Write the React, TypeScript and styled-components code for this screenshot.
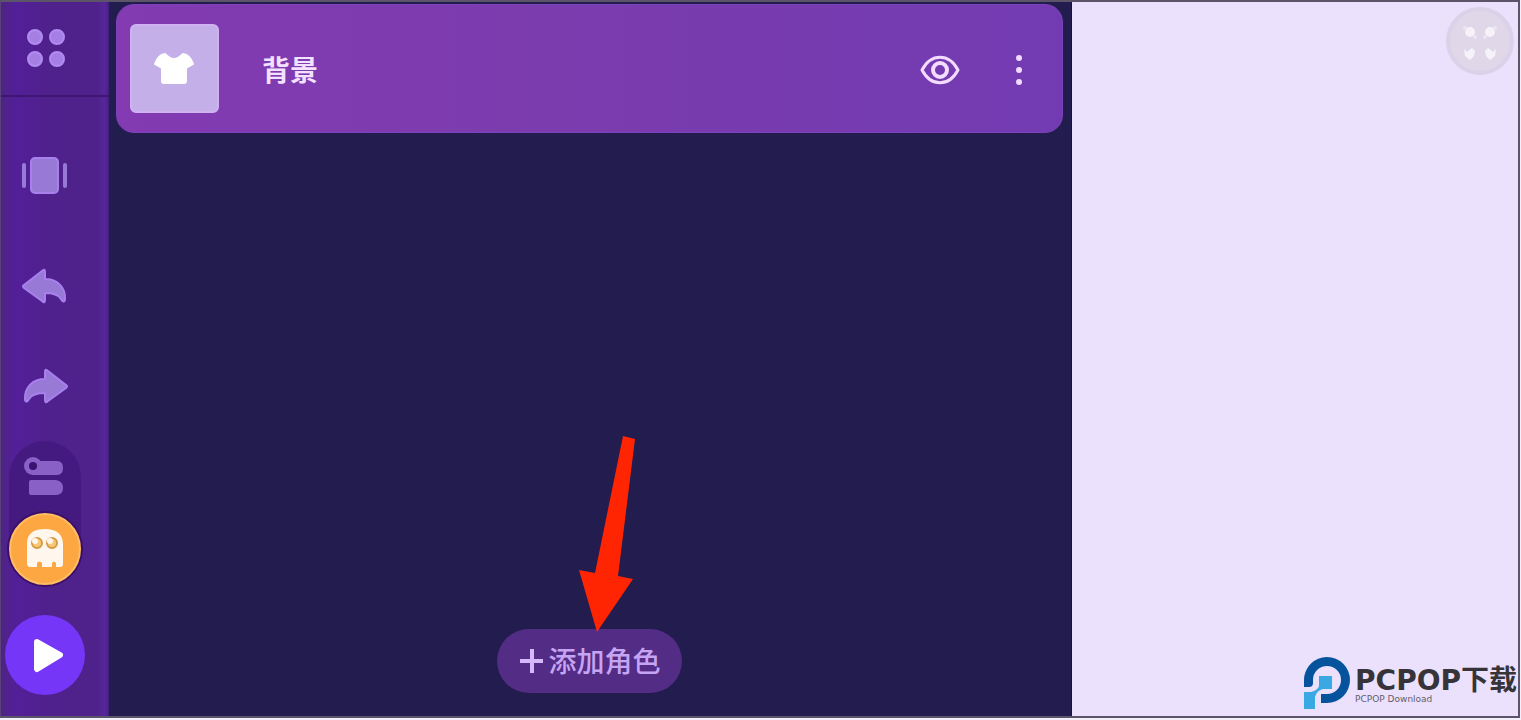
import React from "react";
import styled, { createGlobalStyle } from "styled-components";

const GlobalStyle = createGlobalStyle`
  *, *::before, *::after { box-sizing: border-box; }
  body { margin: 0; background: #f4f0fb; font-family: "Noto Sans", "Noto Sans CJK SC", sans-serif; }
  button { border: 0; padding: 0; margin: 0; background: none; font: inherit; color: inherit; cursor: pointer; }
  svg { display: block; }
  h1 { margin: 0; }
`;

const Page = styled.div`
  min-height: 100vh;
  padding-bottom: 2px;
  display: flex;
`;

const Frame = styled.div`
  flex: 1;
  display: grid;
  grid-template-columns: 108px minmax(0, 963fr) minmax(0, 446fr);
  margin-right: 1px;
  border: 2px solid #5c5468;
  border-left: 1px solid #5a4378;
`;

const Sidebar = styled.aside`
  display: flex;
  flex-direction: column;
  background: linear-gradient(90deg, #4d2482 0, #531f99 14px, #4f218b 50px, #4f218b 96px, #56279a 104px, #43207c 108px);
`;

const SidebarHead = styled.div`
  height: 95px;
  padding: 23px 20px;
  border-bottom: 2px solid #3c1672;
`;

const Tools = styled.nav`
  width: 88px;
  display: flex;
  flex-direction: column;
  align-items: center;
`;

const ToolButton = styled.button<{ $gap: number }>`
  width: 48px;
  height: 48px;
  margin-top: ${(p) => p.$gap}px;
`;

const ModeSwitch = styled.div`
  width: 72px;
  margin-top: 30px;
  border-radius: 36px;
  background: #451a80;
`;

const ModeButton = styled.button`
  display: block;
  width: 72px;
  height: 72px;
`;

const PlayButton = styled.button`
  width: 80px;
  height: 80px;
  margin-top: 30px;
  border-radius: 50%;
  background: #7636f8;
`;

const Stage = styled.main`
  display: flex;
  flex-direction: column;
  justify-content: space-between;
  padding: 2px 8px 23px 7px;
  background: #231c4e;
  border-right: 1px solid #171044;
`;

const LayerCard = styled.section`
  height: 129px;
  display: flex;
  align-items: center;
  padding: 0 20px 0 13px;
  border-radius: 18px;
  border: 1px solid #7b42bb;
  background: linear-gradient(90deg, #833ab2, #7b3cae 45%, #733bb2);
`;

const Thumb = styled.button`
  width: 89px;
  height: 89px;
  border-radius: 6px;
  border: 2px solid #ceb2f2;
  background: #c5afe9;
`;

const LayerName = styled.span`
  flex: 1;
  padding: 2px 0 0 43px;
  font-size: 28px;
  line-height: 40px;
  font-weight: 600;
  color: #f3e2ff;
`;

const CardButton = styled.button`
  width: 48px;
  height: 48px;
  margin-left: 32px;
`;

const AddArea = styled.div`
  position: relative;
  align-self: center;
`;

const AddButton = styled.button`
  display: flex;
  align-items: center;
  justify-content: center;
  gap: 4px;
  width: 185px;
  height: 64px;
  border-radius: 32px;
  background: #532c85;
  color: #c5a5f3;
  font-size: 28px;
  line-height: 40px;
  font-weight: 500;
`;

const Pointer = styled.svg`
  position: absolute;
  left: 80px;
  bottom: 60px;
  pointer-events: none;
`;

const Preview = styled.section`
  display: flex;
  flex-direction: column;
  justify-content: space-between;
  align-items: flex-end;
  background: #ebe1fd;
`;

const ExpandButton = styled.button`
  width: 68px;
  height: 68px;
  margin: 5px 4px 0 0;
  border-radius: 50%;
  border: 4px solid #dbd1e8;
  background: #e0d8e9;
`;

const Brand = styled.footer`
  display: flex;
  align-items: center;
  gap: 4px;
  margin: 0 1px 6px 0;
`;

const BrandText = styled.div`
  display: flex;
  flex-direction: column;
  padding-top: 6px;
  white-space: nowrap;
  color: #373439;
`;

const BrandName = styled.h1`
  font-family: "DejaVu Sans", "Noto Sans CJK SC", sans-serif;
  font-size: 28px;
  line-height: 26px;
  font-weight: 700;
`;

const BrandSub = styled.span`
  font-family: "DejaVu Sans", sans-serif;
  font-size: 9px;
  line-height: 10px;
  color: #625d69;
`;

const TOOL = "#987ad6";
const EDGE = "#a780ee";

function GridIcon() {
  return (
    <svg width="48" height="48" viewBox="0 0 48 48" fill="#a57fe3" stroke="#b18bf0" strokeWidth="2">
      <circle cx="14" cy="12" r="7" />
      <circle cx="36" cy="12" r="7" />
      <circle cx="14" cy="34" r="7" />
      <circle cx="36" cy="34" r="7" />
    </svg>
  );
}

function FramesIcon() {
  return (
    <svg width="48" height="48" viewBox="0 0 48 48" fill={TOOL}>
      <rect x="10" y="7" width="27" height="35" rx="4" stroke={EDGE} strokeWidth="2" />
      <rect x="1" y="12" width="4" height="25" rx="2" />
      <rect x="42" y="12" width="4" height="25" rx="2" />
    </svg>
  );
}

const ARROW = "M3 22 L21 8 Q24 5 24 9 V16 C36 16 45 24 44 37 C43 40 41 38 40 36 C37 31 32 30 24 30 V37 Q24 41 21 38 L3 25 Q1 23 3 22 Z";

function UndoIcon() {
  return (
    <svg width="48" height="48" viewBox="0 0 48 48">
      <path d={ARROW} fill={TOOL} stroke={EDGE} strokeWidth="2" strokeLinejoin="round" />
    </svg>
  );
}

function RedoIcon() {
  return (
    <svg width="48" height="48" viewBox="0 0 48 48">
      <path d={ARROW} transform="translate(48 0) scale(-1 1)" fill={TOOL} stroke={EDGE} strokeWidth="2" strokeLinejoin="round" />
    </svg>
  );
}

function BlocksIcon() {
  return (
    <svg width="72" height="72" viewBox="0 0 72 72" fill="#8860c6">
      <path d="M24 20 H48 Q54 20 54 27 Q54 34 48 34 H23 Z" />
      <circle cx="24" cy="25" r="9" />
      <circle cx="24" cy="25" r="4" fill="#3a1270" />
      <path d="M22 39 H47 Q54 40 54 47 Q54 54 47 54 H22 Q20 54 20 52 V41 Q20 39 22 39 Z" />
    </svg>
  );
}

function GhostIcon() {
  return (
    <svg width="72" height="72" viewBox="0 0 72 72" overflow="visible">
      <circle cx="36" cy="36" r="38" fill="#3b0f68" />
      <circle cx="36" cy="36" r="35" fill="#fda742" stroke="#ffbd66" strokeWidth="2" />
      <path d="M18 50 V31 C18 20 25 16 36 16 C47 16 54 21 54 31 V51 Q54 54 51 54 H47 V50 Q45 47 43 50 V54 H33 V50 Q30 47 28 50 V54 H21 Q18 54 18 50 Z" fill="#fff7ed" />
      <g fill="#f7c977" stroke="#d69a45" strokeWidth="2">
        <circle cx="28" cy="30" r="5" />
        <circle cx="43" cy="30" r="5" />
      </g>
      <g fill="#fff7ed">
        <circle cx="26" cy="28" r="3" />
        <circle cx="41" cy="28" r="3" />
      </g>
    </svg>
  );
}

function PlayIcon() {
  return (
    <svg width="80" height="80" viewBox="0 0 80 80">
      <path d="M32 27 L55 40 L32 54 Z" fill="#fff" stroke="#fff" strokeWidth="6" strokeLinejoin="round" />
    </svg>
  );
}

function ShirtIcon() {
  return (
    <svg width="85" height="85" viewBox="0 0 85 85">
      <path d="M33 28 Q42 38 51 28 Q58 29 61 38 L54 42 V55 Q54 57 52 57 H32 Q30 57 30 55 V42 L23 38 Q26 29 33 28 Z" fill="#fff" stroke="#fff" strokeWidth="2" strokeLinejoin="round" />
    </svg>
  );
}

function EyeIcon() {
  return (
    <svg width="48" height="48" viewBox="0 0 48 48" fill="none" stroke="#f3dcff" strokeWidth="3">
      <path d="M8 25 C17 8 35 8 44 25 C35 42 17 42 8 25 Z" strokeLinejoin="round" />
      <circle cx="26" cy="25" r="7" strokeWidth="4" />
    </svg>
  );
}

function MoreIcon() {
  return (
    <svg width="48" height="48" viewBox="0 0 48 48" fill="#f3dcff">
      <circle cx="25" cy="13" r="3" />
      <circle cx="25" cy="25" r="3" />
      <circle cx="25" cy="37" r="3" />
    </svg>
  );
}

function PlusIcon() {
  return (
    <svg width="26" height="26" viewBox="0 0 26 26" stroke="#d4b8fb" strokeWidth="4">
      <path d="M2 13 H25 M14 1 V25" />
    </svg>
  );
}

function ExpandIcon() {
  return (
    <svg width="60" height="60" viewBox="0 0 60 60" fill="#f6f2fa">
      <circle cx="20" cy="21" r="5" />
      <circle cx="40" cy="21" r="5" />
      <path d="M14 38 L17 41 L22 37 L25 40 L24 45 L20 49 L15 45 Z" />
      <path d="M46 38 L43 41 L38 37 L35 40 L36 45 L40 49 L45 45 Z" />
      <g fill="#ece5f3">
        <circle cx="15" cy="17" r="2" />
        <circle cx="45" cy="17" r="2" />
        <circle cx="25" cy="26" r="2" />
        <circle cx="35" cy="26" r="2" />
      </g>
    </svg>
  );
}

function BrandLogo() {
  return (
    <svg width="48" height="54" viewBox="0 0 48 54" aria-hidden="true">
      <path d="M1 31 V24 A23 23 0 1 1 24 47 H18 V38 H24 A14 14 0 1 0 10 24 V27 Q10 31 6 31 Z" fill="#05539d" />
      <path d="M16 20 H29 V33 H20 Q14 34 12 41 V53 H1 V36 H8 Q15 34 16 30 Z" fill="#39a8e3" />
    </svg>
  );
}

export default function App() {
  return (
    <>
      <GlobalStyle />
      <Page>
        <Frame>
          <Sidebar>
            <SidebarHead>
              <button aria-label="菜单"><GridIcon /></button>
            </SidebarHead>
            <Tools>
              <ToolButton $gap={54} aria-label="场景"><FramesIcon /></ToolButton>
              <ToolButton $gap={64} aria-label="撤销"><UndoIcon /></ToolButton>
              <ToolButton $gap={52} aria-label="重做"><RedoIcon /></ToolButton>
              <ModeSwitch>
                <ModeButton aria-label="积木"><BlocksIcon /></ModeButton>
                <ModeButton aria-label="角色"><GhostIcon /></ModeButton>
              </ModeSwitch>
              <PlayButton aria-label="播放"><PlayIcon /></PlayButton>
            </Tools>
          </Sidebar>
          <Stage>
            <LayerCard>
              <Thumb aria-label="背景造型"><ShirtIcon /></Thumb>
              <LayerName>背景</LayerName>
              <CardButton aria-label="显示"><EyeIcon /></CardButton>
              <CardButton aria-label="更多"><MoreIcon /></CardButton>
            </LayerCard>
            <AddArea>
              <AddButton>
                <PlusIcon />
                <span>添加角色</span>
              </AddButton>
              <Pointer width="60" height="200" viewBox="0 0 60 200" aria-hidden="true">
                <path d="M46 3 L58 6 L41 143 L56 146 L20 199 L2 137 L18 140 Z" fill="#ff2503" />
              </Pointer>
            </AddArea>
          </Stage>
          <Preview>
            <ExpandButton aria-label="全屏"><ExpandIcon /></ExpandButton>
            <Brand>
              <BrandLogo />
              <BrandText>
                <BrandName>PCPOP下载</BrandName>
                <BrandSub>PCPOP Download</BrandSub>
              </BrandText>
            </Brand>
          </Preview>
        </Frame>
      </Page>
    </>
  );
}
